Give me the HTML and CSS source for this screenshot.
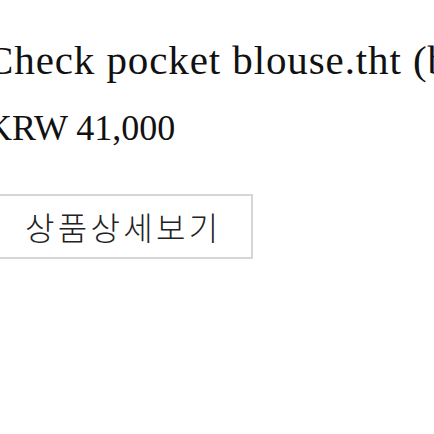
FILE: index.html
```html
<!DOCTYPE html>
<html lang="ko">
<head>
<meta charset="utf-8">
<link rel="stylesheet" href="styles.css">
</head>
<body>
<div class="product">
  <h1 class="title">Check pocket blouse.tht (black)</h1>
  <p class="price">KRW 41,000</p>
  <div class="actions">
    <a class="detail-btn" href="#">상품상세보기</a>
  </div>
</div>
</body>
</html>
```
FILE: styles.css
```css
html, body {
  margin: 0;
  padding: 0;
  background: #fff;
  overflow: hidden;
}
.product {
  margin-left: -14px;
  padding-top: 35px;
  white-space: nowrap;
  color: #111;
  font-family: "Liberation Serif", serif;
}
.title {
  margin: 0;
  font-size: 41px;
  font-weight: 400;
  letter-spacing: 0.9px;
  line-height: 50px;
}
.price {
  margin: 18px 0 0;
  font-size: 36px;
  line-height: 50px;
}
.actions {
  margin-top: 41px;
  display: flex;
}
.detail-btn {
  display: block;
  border: 2px solid #d6d6d6;
  padding: 0 30px 0 37px;
  height: 61px;
  line-height: 61px;
  font-family: "Noto Sans CJK KR", sans-serif;
  font-size: 32px;
  font-weight: 300;
  letter-spacing: 3.3px;
  color: #222;
  text-decoration: none;
}
```
